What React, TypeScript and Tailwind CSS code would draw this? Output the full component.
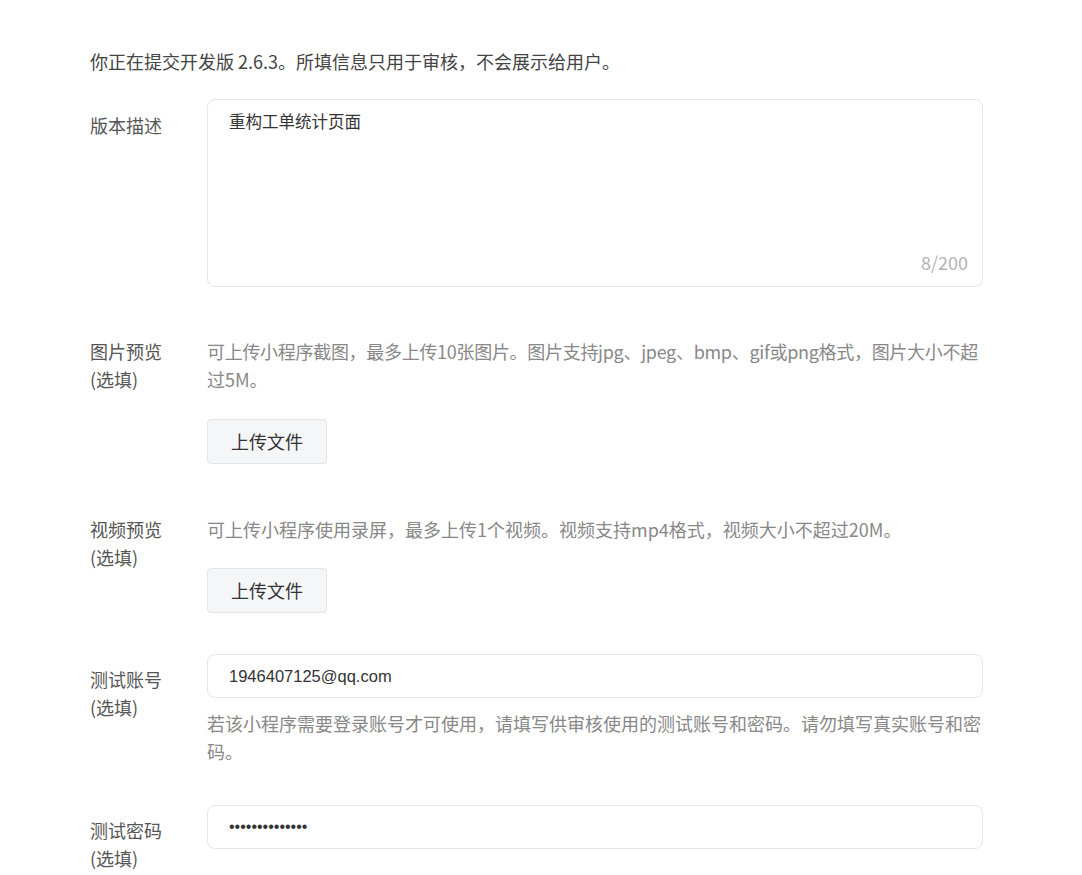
import { useState } from "react";

const cjk = "font-['Noto_Sans_CJK_SC',sans-serif]";

function Label({ title, optional, className }: { title: string; optional?: boolean; className?: string }) {
  return (
    <div className={`w-[117px] shrink-0 text-[18px] leading-[28px] text-[#555] ${className ?? ""}`}>
      <div>{title}</div>
      {optional && <div>(选填)</div>}
    </div>
  );
}

function UploadButton({ className }: { className?: string }) {
  return (
    <button
      className={`flex h-[45px] w-[120px] items-center justify-center rounded-[4px] border border-[#e4e5e7] bg-[#f5f6f8] text-[18px] text-[#333] ${className ?? ""}`}
    >
      上传文件
    </button>
  );
}

export default function App() {
  const [desc, setDesc] = useState("重构工单统计页面");
  const [account, setAccount] = useState("1946407125@qq.com");
  const [password, setPassword] = useState("12345678901234");

  return (
    <div className={`min-h-[875px] w-[1082px] bg-white pl-[90px] pt-[47px] ${cjk}`}>
      <p className="text-[18px] leading-[28px] text-[#444]">
        你正在提交开发版 2.6.3。所填信息只用于审核，不会展示给用户。
      </p>

      {/* 版本描述 */}
      <div className="mt-[24px] flex">
        <Label title="版本描述" className="pt-[12px]" />
        <div className="relative h-[188px] w-[776px] rounded-[8px] border border-[#e6e6e6]">
          <textarea
            value={desc}
            onChange={(e) => setDesc(e.target.value)}
            maxLength={200}
            className="h-full w-full resize-none bg-transparent px-[21px] pt-[7px] text-[16.5px] leading-[28px] text-[#333] outline-none"
          />
          <span className="absolute bottom-[10px] right-[14px] text-[18px] leading-[28px] text-[#b3b3b3]">
            {desc.length}/200
          </span>
        </div>
      </div>

      {/* 图片预览 */}
      <div className="mt-[50px] flex">
        <Label title="图片预览" optional />
        <div className="w-[776px]">
          <p className="text-[18px] leading-[28px] text-[#888]">
            <span className="block whitespace-nowrap tracking-[-0.3px]">
              可上传小程序截图，最多上传10张图片。图片支持jpg、jpeg、bmp、gif或png格式，图片大小不超
            </span>
            <span className="block">过5M。</span>
          </p>
          <UploadButton className="mt-[26px]" />
        </div>
      </div>

      {/* 视频预览 */}
      <div className="mt-[51px] flex">
        <Label title="视频预览" optional />
        <div className="w-[776px]">
          <p className="text-[18px] leading-[28px] text-[#888]">
            可上传小程序使用录屏，最多上传1个视频。视频支持mp4格式，视频大小不超过20M。
          </p>
          <UploadButton className="mt-[25px]" />
        </div>
      </div>

      {/* 测试账号 */}
      <div className="mt-[41px] flex">
        <Label title="测试账号" optional className="pt-[11px]" />
        <div className="w-[776px]">
          <input
            value={account}
            onChange={(e) => setAccount(e.target.value)}
            className="h-[44px] w-full rounded-[8px] border border-[#e6e6e6] px-[21px] font-['Liberation_Sans',sans-serif] text-[16.5px] text-[#333] outline-none"
          />
          <p className="mt-[11px] text-[18px] leading-[28px] text-[#888]">
            若该小程序需要登录账号才可使用，请填写供审核使用的测试账号和密码。请勿填写真实账号和密码。
          </p>
        </div>
      </div>

      {/* 测试密码 */}
      <div className="mt-[40px] flex">
        <Label title="测试密码" optional className="pt-[11px]" />
        <div className="w-[776px]">
          <input
            type="password"
            value={password}
            onChange={(e) => setPassword(e.target.value)}
            className="h-[44px] w-full rounded-[8px] border border-[#e6e6e6] px-[21px] font-['Liberation_Sans',sans-serif] text-[16px] text-[#333] outline-none"
          />
        </div>
      </div>
    </div>
  );
}
